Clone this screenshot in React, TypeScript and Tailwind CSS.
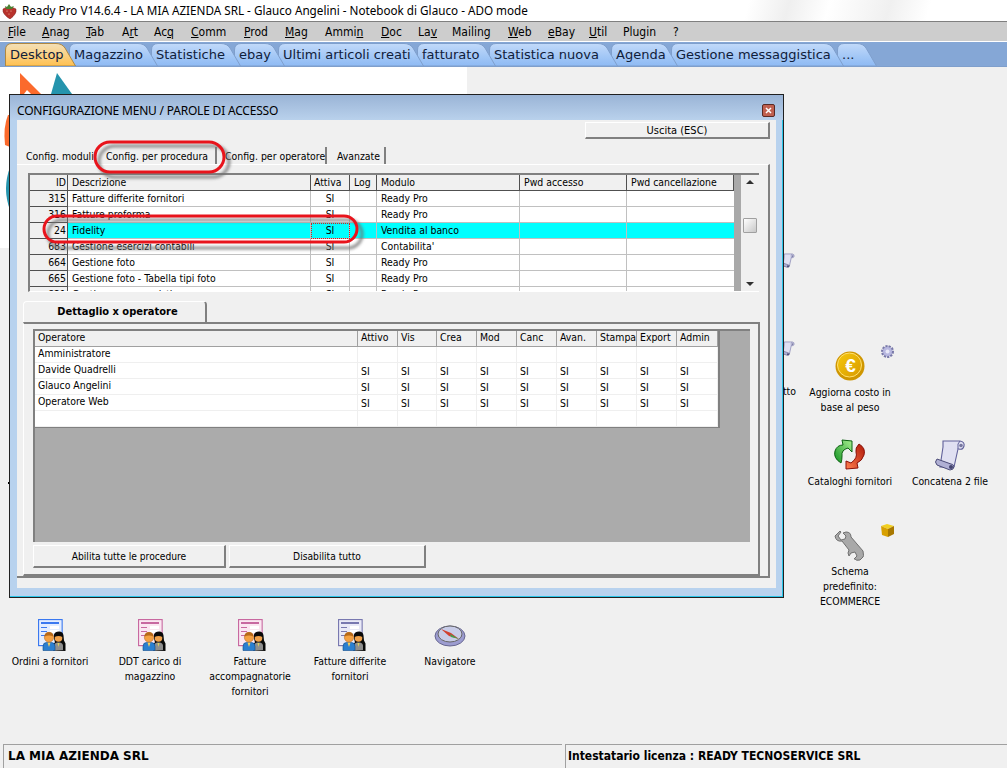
import React from "react";

const menus: [string, number, number][] = [
  ["File", 34, 0], ["Anag", 44, 0], ["Tab", 36, 0], ["Art", 32, 1], ["Acq", 37, 2], ["Comm", 53, 0], ["Prod", 41, 0], ["Mag", 40, 0],
  ["Ammin", 56, 4], ["Doc", 37, 0], ["Lav", 34, 2], ["Mailing", 56, -1], ["Web", 40, 0], ["eBay", 41, 0], ["Util", 34, 0], ["Plugin", 50, -1], ["?", 20, -1],
];

const tabs: [string, number][] = [
  ["Desktop", 71], ["Magazzino", 89], ["Statistiche", 90], ["ebay", 51], ["Ultimi articoli creati", 146], ["fatturato", 79], ["Statistica nuova", 129], ["Agenda", 67], ["Gestione messaggistica", 173], ["...", 40],
];

const rows1 = [
  ["315", "Fatture differite fornitori", "SI", "", "Ready Pro"],
  ["316", "Fatture proforma", "SI", "", "Ready Pro"],
  ["24", "Fidelity", "SI", "", "Vendita al banco"],
  ["683", "Gestione esercizi contabili", "SI", "", "Contabilita'"],
  ["664", "Gestione foto", "SI", "", "Ready Pro"],
  ["665", "Gestione foto - Tabella tipi foto", "SI", "", "Ready Pro"],
  ["821", "Gestione messaggistica", "SI", "", "Ready Pro"],
];

const cols2 = ["Attivo", "Vis", "Crea", "Mod", "Canc", "Avan.", "Stampa", "Export", "Admin"];

function PeopleDoc({ c, d }: { c: string; d: string }) {
  return (
    <svg className="ml-[4px]" width="28" height="32" viewBox="0 0 28 32">
      <rect x="0.600" y="0.600" width="23.500" height="26" fill="#fff" stroke={c} strokeWidth="1.200" />
      <rect x="1.500" y="1.500" width="22" height="24" fill={d} opacity="0.35" />
      <rect x="3" y="3" width="18" height="2" fill={c} />
      <rect x="3" y="8" width="6" height="1" fill={c} />
      <rect x="12" y="7" width="9" height="3" fill="#fff" />
      <rect x="3" y="12" width="6" height="1" fill={c} />
      <rect x="12" y="11" width="9" height="3" fill="#fff" />
      <rect x="3" y="16" width="4" height="1" fill={c} />
      <path d="M15 31.500v-7l2-1-1-4v-4q1-3 5-3 4 0 4.500 4l0.500 5 1.500 3v7.500z" fill="#0a0a0a" />
      <path d="M16 31v-4q0-3 3-3.500h3q3 0.500 3 3.500v4z" fill="#8e8e8e" />
      <path d="M19.500 24h2l-1 4z" fill="#d8d060" />
      <circle cx="20.500" cy="19" r="3.800" fill="#f2a24a" />
      <path d="M16.500 18q0-4 4-4t4 4q-4-2-8 0z" fill="#0a0a0a" />
      <path d="M5 31.500v-4q0-4 3.500-4h5q3.500 0 3.500 4v4z" fill="#2a7fd0" stroke="#0c4a8c" strokeWidth="0.600" />
      <path d="M9.500 23.500h3l-1.500 4.500z" fill="#f4d060" />
      <circle cx="11" cy="18.500" r="4.600" fill="#f4a040" stroke="#a85a10" strokeWidth="0.500" />
      <path d="M6.500 17.500q0-4.500 4.500-4.500t4.500 4.500q-4.500-2-9 0z" fill="#b86a18" />
    </svg>
  );
}

function Scroll({ s = 32 }: { s?: number }) {
  return (
    <svg width={s} height={s} viewBox="0 0 32 32">
      <path d="M9 2h17q5 1 4 5t-5 3h-1l-4 18H6l3-20q0-3 0-6z" fill="#e0e0f2" stroke="#60609a" strokeWidth="1.100" />
      <path d="M26 2q-3 2-2 8" fill="none" stroke="#60609a" />
      <circle cx="27" cy="6.500" r="1.800" fill="#77779f" />
      <path d="M3 20q-3 3 0 6l13 5q4 0 4-4-1-2-3-2z" fill="#b0b0d4" stroke="#4c4c78" />
      <circle cx="17" cy="28" r="2" fill="#444470" />
    </svg>
  );
}

function Coin() {
  return (
    <svg width="30" height="30" viewBox="0 0 30 30">
      <defs>
        <linearGradient id="coin" x1="0" y1="0" x2="1" y2="1">
          <stop offset="0" stopColor="#f6c80c" />
          <stop offset="1" stopColor="#d89a00" />
        </linearGradient>
      </defs>
      <circle cx="15" cy="15" r="14.500" fill="#cf9600" />
      <circle cx="14.500" cy="14" r="12" fill="url(#coin)" stroke="#ffe070" />
      <text x="15.500" y="20.500" textAnchor="middle" fontSize="19" fontWeight="bold" fill="#fff" fontFamily="Liberation Sans, sans-serif">€</text>
    </svg>
  );
}

function Arrows() {
  return (
    <svg width="32" height="32" viewBox="0 0 32 32">
      <defs>
        <linearGradient id="ag" x1="1" y1="0" x2="0" y2="1">
          <stop offset="0" stopColor="#a8f090" />
          <stop offset="1" stopColor="#109020" />
        </linearGradient>
        <linearGradient id="ar" x1="1" y1="0" x2="0" y2="1">
          <stop offset="0" stopColor="#b01808" />
          <stop offset="1" stopColor="#ff8050" />
        </linearGradient>
      </defs>
      <path d="M7 24Q-1 19 1 12Q3 6 9 6L8 1L18 2L18 13L14 9Q7 11 8 17Q8 21 7 24Z" fill="url(#ag)" stroke="#0a6010" strokeWidth="1" />
      <path d="M25 5Q32 9 30 16Q28 22 23 24L24 29L12 30L12 22L17 24Q24 19 22 13Q21 9 25 5Z" fill="url(#ar)" stroke="#8a1008" strokeWidth="1" />
    </svg>
  );
}

function Wrench() {
  return (
    <svg width="32" height="32" viewBox="0 0 32 32">
      <path d="M1 7l5-5 1 1-3 4 3 4 4-1 1-3-3-3 3-1q5 0 5 5l12 14q1 6 0 6l-3 3q-4 1-5-1l-1 0 3-3-2-4-4 1-2 3-1-3 1-3L8 12Q2 13 1 7z" fill="#a9a9a9" stroke="#707070" />
    </svg>
  );
}

function Compass() {
  return (
    <svg width="32" height="24" viewBox="0 0 32 24">
      <ellipse cx="16" cy="13" rx="15" ry="10" fill="#9c9cd0" stroke="#66668f" />
      <ellipse cx="16" cy="11" rx="12" ry="8" fill="#c8cce8" stroke="#666" />
      <path d="M7 6l10 4 8 6-10-3z" fill="#d04030" />
      <path d="M16 11l9 5-8-2z" fill="#40a050" />
    </svg>
  );
}

function Gear() {
  return (
    <svg width="15" height="15" viewBox="0 0 15 15">
      <circle cx="7.500" cy="7.500" r="5" fill="#a8a8d8" stroke="#7878a8" strokeWidth="3" strokeDasharray="2 1" />
      <circle cx="7.500" cy="7.500" r="4.500" fill="#b8b8e0" />
      <circle cx="7.500" cy="7.500" r="2" fill="#e8e8f8" />
    </svg>
  );
}

function Cube() {
  return (
    <svg width="15" height="15" viewBox="0 0 15 15">
      <path d="M1 3l6-2 7 2-6 3z" fill="#f2d020" />
      <path d="M1 3l7 3v8l-6-2z" fill="#d8a000" />
      <path d="M14 3l-6 3v8l6-3z" fill="#a87800" />
    </svg>
  );
}

function Strawberry() {
  return (
    <svg width="15" height="16" viewBox="0 0 15 16">
      <path d="M1 6q6-4 13 0 1 5-6 10Q0 11 1 6z" fill="#b8322c" stroke="#7a1a18" strokeWidth="0.500" />
      <path d="M3 3l2 1 2-3 2 3 3-1-2 3H4z" fill="#4a8030" />
      <circle cx="5" cy="8" r="0.600" fill="#f0c0a0" /><circle cx="9" cy="8" r="0.600" fill="#f0c0a0" /><circle cx="7" cy="11" r="0.600" fill="#f0c0a0" />
    </svg>
  );
}

function DeskIcon({ cls, icon, lines }: { cls: string; icon: React.ReactNode; lines: string[] }) {
  return (
    <div className={"absolute w-[100px] flex flex-col items-center text-center text-[10.4px] leading-[15px] text-black " + cls}>
      <div className="h-[32px] flex items-center justify-center">{icon}</div>
      <div className="mt-[3px]">
        {lines.map((l) => (
          <div key={l} className="whitespace-nowrap">{l}</div>
        ))}
      </div>
    </div>
  );
}

function Tab({ label, w, i, active }: { label: string; w: number; i: number; active: boolean }) {
  const id = "tabg" + i;
  return (
    <div className="relative h-[24px] shrink-0 -mr-[7px]" style={{ width: w, zIndex: 20 - i }}>
      <svg className="absolute inset-0" width={w} height="24" viewBox={`0 0 ${w} 24`}>
        <defs>
          <linearGradient id={id} x1="0" y1="0" x2="0" y2="1">
            <stop offset="0" stopColor={active ? "#f3e0b8" : "#c2dafa"} />
            <stop offset="0.55" stopColor={active ? "#fbd080" : "#a4c8f6"} />
            <stop offset="1" stopColor={active ? "#ffc050" : "#8ebaf4"} />
          </linearGradient>
        </defs>
        <path d={`M0.500 24V8Q0.500 1.500 7 1.500H${w - 20}Q${w - 14} 1.500 ${w - 11} 6L${w - 0.5} 24Z`} fill={`url(#${id})`} stroke={active ? "#b08840" : "#7f9fcc"} />
      </svg>
      <span className="relative pl-[5px] pt-[1px] leading-[24px] text-[13px] whitespace-nowrap [font-family:'DejaVu_Sans',sans-serif] text-[#10203a] block">{label}</span>
    </div>
  );
}

export default function App() {
  return (
    <div className="relative w-[1007px] h-[768px] overflow-hidden flex flex-col bg-[#f0f0f0] text-black text-[10.4px] [font-family:'DejaVu_Sans_Condensed','DejaVu_Sans',sans-serif]">
      {/* title bar */}
      <div className="h-[21px] shrink-0 flex items-center bg-[linear-gradient(105deg,#fff_0%,#fff_74%,#efefef_78%,#fff_82%,#f0f0f0_88%,#fff_92%,#fff_100%)]">
        <div className="ml-[2px] w-[15px] h-[16px]"><Strawberry /></div>
        <span className="ml-[5px] pt-[1px] text-[11.7px] whitespace-nowrap [font-family:'Noto_Sans',sans-serif]">Ready Pro V14.6.4 - LA MIA AZIENDA SRL - Glauco Angelini - Notebook di Glauco - ADO mode</span>
      </div>

      {/* menu */}
      <div className="h-[21px] shrink-0 flex items-center pl-[8px] bg-[#cdcdcd] border-t border-[#7f7f7f] border-b border-b-white text-[12px]">
        {menus.map(([m, w, u]) => (
          <div key={m} className="shrink-0 whitespace-nowrap" style={{ width: w }}>
            {u < 0 ? m : (
              <>
                {m.slice(0, u)}
                <span className="underline">{m[u]}</span>
                {m.slice(u + 1)}
              </>
            )}
          </div>
        ))}
      </div>

      {/* tab strip */}
      <div className="h-[25px] shrink-0 flex items-end pl-[5px] bg-[#85a7d6] border-b border-b-[#7f9fcc]">
        {tabs.map(([t, w], i) => (
          <Tab key={t} label={t} w={w} i={i} active={i === 0} />
        ))}
      </div>

      {/* desktop */}
      <div className="relative flex-1 bg-[#f0f0f0] overflow-hidden">
        <div className="absolute left-0 top-0 w-[467px] h-[181px] bg-white" />
        <svg className="absolute left-0 top-0" width="80" height="160" viewBox="0 0 80 160">
          <path d="M20 6L41 27H31L27 23L24 27H20z" fill="#fb6a2c" />
          <path d="M57 6L72 27H51z" fill="#2594ad" />
          <path d="M8 48Q3 60 5 78L10 80V48z" fill="#fb6a2c" />
          <path d="M10 100Q2 122 10 143z" fill="#2594ad" />
        </svg>
        <div className="absolute left-[8px] top-[415px] w-[2px] h-[2px] bg-black" />

        {/* icons partly behind the window */}
        <div className="absolute left-[780px] top-[186px]"><Scroll s={15} /></div>
        <div className="absolute left-[780px] top-[274px]"><Scroll s={15} /></div>
        <div className="absolute left-[770px] top-[317px] w-[26px] text-right leading-[15px]">tto</div>

        <DeskIcon cls="left-[800px] top-[283px]" icon={<Coin />} lines={["Aggiorna costo in", "base al peso"]} />
        <div className="absolute left-[880px] top-[277px]"><Gear /></div>
        <DeskIcon cls="left-[800px] top-[372px]" icon={<Arrows />} lines={["Cataloghi fornitori"]} />
        <DeskIcon cls="left-[900px] top-[372px]" icon={<Scroll />} lines={["Concatena 2 file"]} />
        <DeskIcon cls="left-[800px] top-[462px]" icon={<Wrench />} lines={["Schema", "predefinito:", "ECOMMERCE"]} />
        <div className="absolute left-[880px] top-[456px]"><Cube /></div>

        <DeskIcon cls="left-0 top-[552px]" icon={<PeopleDoc c="#3a78f0" d="#b0ccff" />} lines={["Ordini a fornitori"]} />
        <DeskIcon cls="left-[100px] top-[552px]" icon={<PeopleDoc c="#c868a0" d="#f4b8d8" />} lines={["DDT carico di", "magazzino"]} />
        <DeskIcon cls="left-[200px] top-[552px]" icon={<PeopleDoc c="#c868a0" d="#f4b8d8" />} lines={["Fatture", "accompagnatorie", "fornitori"]} />
        <DeskIcon cls="left-[300px] top-[552px]" icon={<PeopleDoc c="#7878b0" d="#c0c0e8" />} lines={["Fatture differite", "fornitori"]} />
        <DeskIcon cls="left-[400px] top-[552px]" icon={<Compass />} lines={["Navigatore"]} />

        {/* window */}
        <div className="absolute left-[9px] top-[27px] w-[775px] h-[504px] border border-[#202020] bg-[#b8d2ee] shadow-[inset_-1px_-1px_0_#29c5e8] flex flex-col">
          <div className="h-[25px] shrink-0 flex items-center justify-between pl-[7px] pr-[8px] bg-[linear-gradient(#9ab4d6,#b9d1ec)]">
            <span className="text-[12px] pt-[7px] [font-family:'Noto_Sans',sans-serif] tracking-[-0.2px]">CONFIGURAZIONE MENU / PAROLE DI ACCESSO</span>
            <div className="w-[13px] h-[13px] mt-[5px] rounded-[2px] border border-[#5a2a24] bg-[#c0604f] flex items-center justify-center">
              <svg width="7" height="7" viewBox="0 0 7 7"><path d="M1 1l5 5M6 1L1 6" stroke="#fff" strokeWidth="1.500" /></svg>
            </div>
          </div>
          <div className="mx-[7px] h-[468px] bg-[#f0f0f0] flex flex-col">
            <div className="flex justify-end pr-[6px] pt-[2px]">
              <div className="w-[185px] h-[17px] flex items-center justify-center pt-[2px] text-[11px] bg-[#f0f0f0] border border-white border-r-2 border-b-2 border-r-[#808080] border-b-[#808080]">Uscita (ESC)</div>
            </div>
            {/* config tabs */}
            <div className="mt-[8px] h-[17px] flex items-end pl-[9px] relative">
              <div className="w-[80px] h-[17px] whitespace-nowrap leading-[19px]">Config. moduli</div>
              <div className="w-[111px] h-[17px] whitespace-nowrap border-r-2 border-[#808080] leading-[18px]">Config. per procedura</div>
              <div className="w-[110px] pl-[8px] h-[17px] whitespace-nowrap border-r-2 border-[#808080] leading-[19px]">Config. per operatore</div>
              <div className="w-[59px] pl-[10px] h-[17px] whitespace-nowrap border-r-2 border-[#808080] leading-[19px]">Avanzate</div>
            </div>
            {/* tab page */}
            <div className="w-[753px] h-[414px] border-t border-t-white border-r-2 border-r-[#808080] border-b-2 border-b-[#808080] pt-[8px] pl-[11px] flex flex-col">
              <div className="w-[731px] h-[119px] overflow-hidden border-t-2 border-l-2 border-[#808080] flex bg-white border-b border-b-white">
                <div className="w-[704px] shrink-0">
                  <div className="grid grid-cols-[38px_243px_39px_27px_143px_107px_107px] h-[16px] bg-[#f0f0f0] border-b border-b-[#505050]">
                    {["ID", "Descrizione", "Attiva", "Log", "Modulo", "Pwd accesso", "Pwd cancellazione"].map((h, i) => (
                      <div key={h} className={"border-r border-r-[#505050] leading-[15px] whitespace-nowrap overflow-hidden " + (i === 0 ? "text-right pr-[1px]" : i === 2 ? "pl-[3px]" : "pl-[4px]")}>{h}</div>
                    ))}
                  </div>
                  {rows1.map((r) => {
                    const sel = r[0] === "24";
                    return (
                      <div key={r[0]} className={"grid grid-cols-[38px_243px_39px_27px_143px_107px_107px] h-[16px] border-b border-b-[#c0c0c0] " + (sel ? "bg-[#00ffff]" : "bg-white")}>
                        <div className="bg-[#f0f0f0] text-right pr-[1px] leading-[15px] border-r border-r-[#505050] border-b border-b-[#505050] h-[16px]">{r[0]}</div>
                        <div className="pl-[4px] leading-[15px] border-r border-r-[#c0c0c0] whitespace-nowrap">{r[1]}</div>
                        <div className={"text-center leading-[15px] border-r border-r-[#c0c0c0] " + (sel ? "outline-1 -outline-offset-1 outline-dotted outline-[#d02020]" : "")}>{r[2]}</div>
                        <div className="border-r border-r-[#c0c0c0]" />
                        <div className="pl-[4px] leading-[15px] border-r border-r-[#c0c0c0] whitespace-nowrap">{r[4]}</div>
                        <div className="border-r border-r-[#c0c0c0]" />
                        <div />
                      </div>
                    );
                  })}
                </div>
                <div className="w-[7px] bg-[#a9a9a9] shrink-0" />
                <div className="flex-1 bg-[#f0f0f0] relative flex flex-col items-center justify-between py-[5px]">
                  <div className="w-0 h-0 border-x-[4px] border-x-transparent border-b-[4px] border-b-[#303030]" />
                  <div className="absolute left-[2px] top-[43px] w-[14px] h-[15px] border border-[#a0a0a0] rounded-[1px] bg-[linear-gradient(135deg,#fff,#c8c8c8)]" />
                  <div className="w-0 h-0 border-x-[4px] border-x-transparent border-t-[4px] border-t-[#303030]" />
                </div>
              </div>

              <div className="-ml-[5px] mt-[9px] w-[184px] h-[21px] pl-[6px] rounded-tl-[4px] rounded-tr-[4px] border-t border-t-white border-l border-l-white border-r-2 border-r-[#808080] flex items-center justify-center font-bold text-[11px]">Dettaglio x operatore</div>
              <div className="-ml-[5px] w-[737px] h-[254px] border-t-2 border-t-[#808080] border-r-2 border-r-[#808080] border-b-2 border-b-[#808080] border-l border-l-white pt-[5px] pl-[9px] flex flex-col">
                <div className="w-[717px] h-[213px] bg-[#ababab] border-t-2 border-l-2 border-[#808080] overflow-hidden">
                  <div className="w-[685px] h-[97px] bg-white border-r-2 border-b-2 border-[#808080]">
                    <div className="grid grid-cols-[323px_40px_39px_40px_40px_40px_40px_40px_40px_41px] h-[16px] bg-[#f0f0f0] border-b border-b-[#a0a0a0]">
                      {["Operatore", ...cols2].map((h) => (
                        <div key={h} className="pl-[3px] leading-[13px] border-r border-r-[#a0a0a0] whitespace-nowrap overflow-hidden">{h}</div>
                      ))}
                    </div>
                    {["Amministratore", "Davide Quadrelli", "Glauco Angelini", "Operatore Web", ""].map((n, ri) => (
                      <div key={ri} className="grid grid-cols-[323px_40px_39px_40px_40px_40px_40px_40px_40px_41px] h-[16px] border-b border-b-[#efefef]">
                        <div className="pl-[3px] leading-[13px] border-r border-r-[#efefef]">{n}</div>
                        {cols2.map((c) => (
                          <div key={c} className="pl-[3px] pt-[1px] leading-[15px] border-r border-r-[#efefef]">{ri >= 1 && ri <= 3 ? "SI" : ""}</div>
                        ))}
                      </div>
                    ))}
                  </div>
                </div>
                <div className="mt-[3px] flex gap-[3px]">
                  <div className="w-[193px] h-[23px] pt-[1px] text-[10.2px] flex items-center justify-center border border-white border-r-2 border-b-2 border-r-[#808080] border-b-[#808080]">Abilita tutte le procedure</div>
                  <div className="w-[197px] h-[23px] pt-[1px] text-[10.2px] flex items-center justify-center border border-white border-r-2 border-b-2 border-r-[#808080] border-b-[#808080]">Disabilita tutto</div>
                </div>
              </div>
            </div>
          </div>
        </div>

        {/* red annotation marks */}
        <svg className="absolute left-0 top-0 pointer-events-none" width="1007" height="677" viewBox="0 67 1007 677">
          <defs>
            <filter id="bl" x="-10%" y="-30%" width="120%" height="160%"><feGaussianBlur stdDeviation="1.500" /></filter>
          </defs>
          <rect x="99" y="146" width="130" height="31" rx="15.500" fill="none" stroke="#707070" strokeWidth="3" filter="url(#bl)" opacity="0.8" />
          <rect x="48" y="220" width="314" height="28" rx="14" fill="none" stroke="#707070" strokeWidth="3" filter="url(#bl)" opacity="0.8" />
          <rect x="95" y="142" width="129" height="30" rx="15" fill="none" stroke="#e8141c" strokeWidth="3" />
          <rect x="44" y="216" width="313" height="26" rx="13" fill="none" stroke="#e8141c" strokeWidth="3" />
        </svg>
      </div>

      {/* status bar */}
      <div className="h-[24px] shrink-0 flex bg-[#f0f0f0] font-bold text-[12px]">
        <div className="ml-[3px] w-[559px] pl-[4px] border-t border-l border-[#a0a0a0] leading-[22px] [font-family:'DejaVu_Sans',sans-serif]">LA MIA AZIENDA SRL</div>
        <div className="ml-[3px] flex-1 pl-[2px] border-t border-l border-[#a0a0a0] leading-[22px]">Intestatario licenza : READY TECNOSERVICE SRL</div>
      </div>
    </div>
  );
}
